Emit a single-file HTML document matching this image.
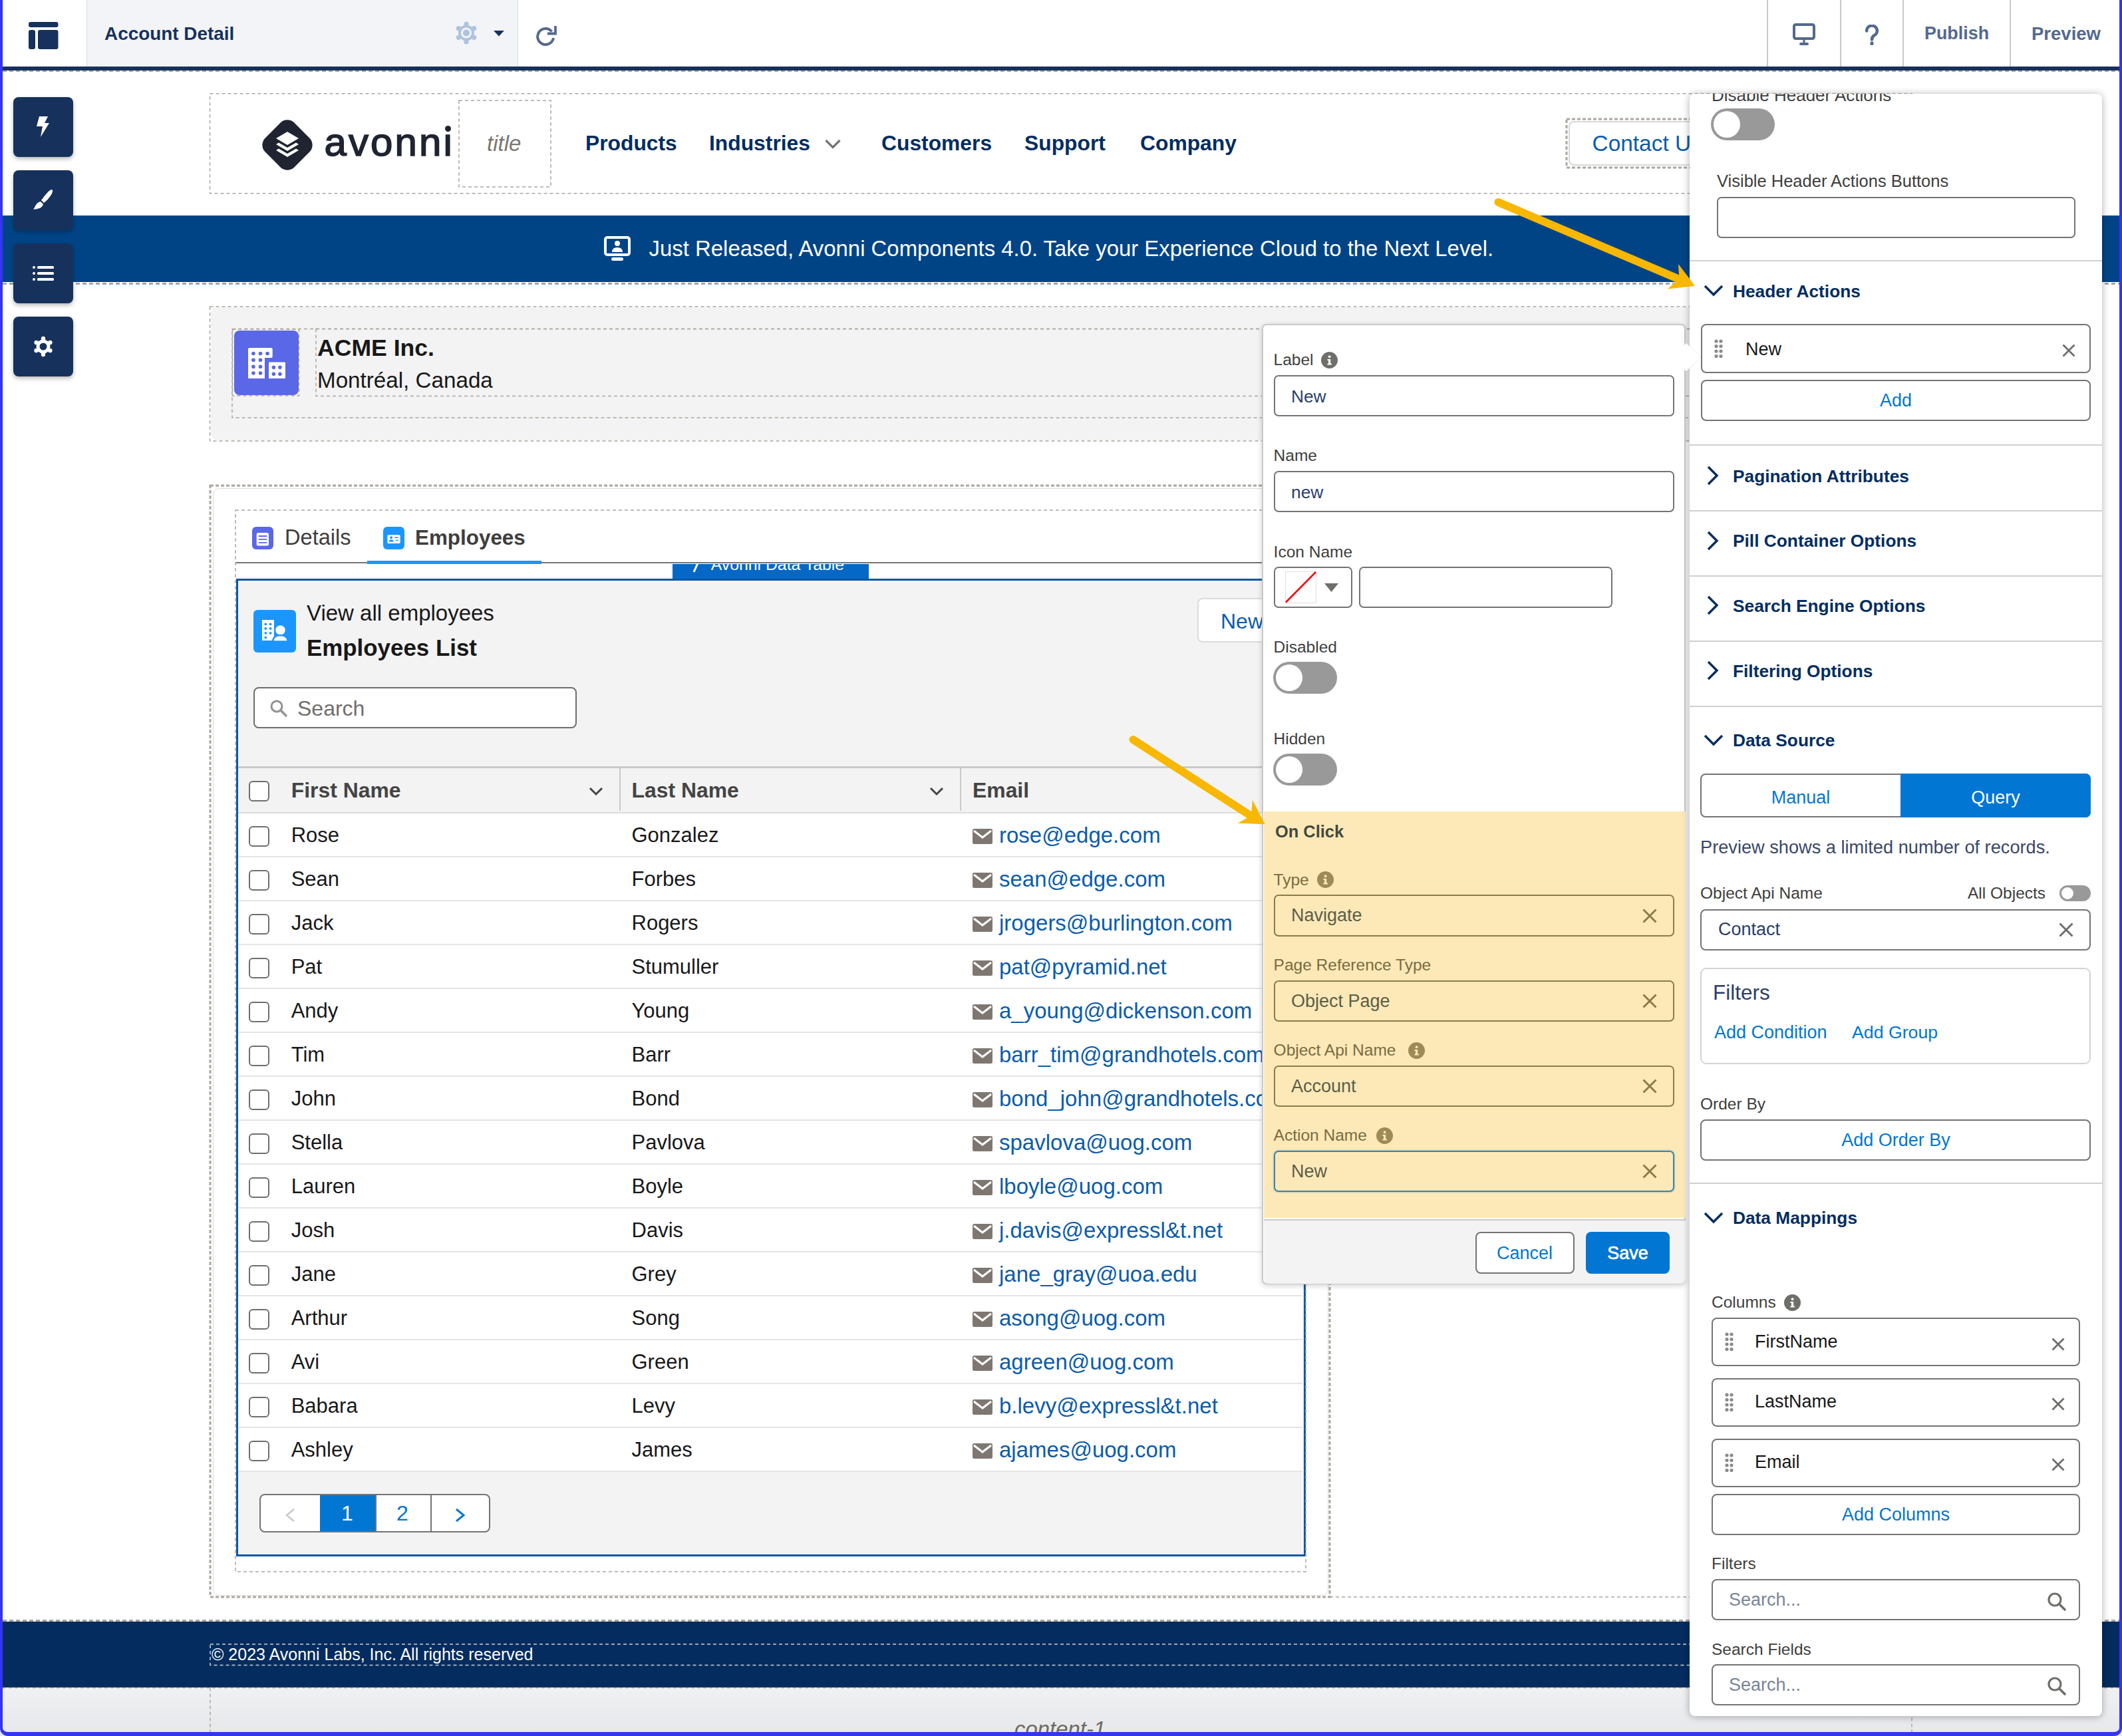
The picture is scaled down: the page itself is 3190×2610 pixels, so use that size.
<!DOCTYPE html><html><head><meta charset="utf-8"><style>
html,body{margin:0;padding:0;}
body{width:3190px;height:2610px;position:relative;overflow:hidden;background:#fff;font-family:"Liberation Sans", sans-serif;}
.a{position:absolute;}
.t{position:absolute;white-space:nowrap;line-height:1;}
</style></head><body>
<div class="a" style="left:0px;top:2438px;width:3190px;height:99px;background:#042c5f"></div>
<div class="a" style="left:0px;top:2537px;width:3190px;height:73px;background:linear-gradient(#f0f1f3,#e6e7ea)"></div>
<div class="t " style="left:1525.0px;top:2584.2px;font-size:32.9px;color:#6e6a64;font-weight:400;font-style:italic">content-1</div>
<div class="a" style="left:0px;top:324px;width:3190px;height:100px;background:#014486"></div>
<svg class="a" style="left:908px;top:355px" width="40" height="38" viewBox="0 0 40 38">
<rect x="2" y="2" width="36" height="26" rx="3" fill="none" stroke="#fff" stroke-width="4"/>
<circle cx="20" cy="11" r="4" fill="#fff"/><path d="M12 24 q0-7 8-7 q8 0 8 7z" fill="#fff"/>
<rect x="11" y="32" width="18" height="5" rx="2.5" fill="#fff"/></svg>
<div class="t " style="left:975.6px;top:358.2px;font-size:32.9px;color:#fff;font-weight:400;">Just Released, Avonni Components 4.0. Take your Experience Cloud to the Next Level.</div>
<svg class="a" style="left:392px;top:179px" width="80" height="78" viewBox="0 0 80 78">
<rect x="9" y="8" width="62" height="62" rx="15" fill="#1f2430" transform="rotate(45 40 39)"/>
<path d="M40 19 L57 29 L40 39 L23 29 Z" fill="#fff"/>
<path d="M23 38 L27 35.5 L40 43 L53 35.5 L57 38 L40 48 Z" fill="#fff"/>
<path d="M23 47 L27 44.5 L40 52 L53 44.5 L57 47 L40 57 Z" fill="#fff"/></svg>
<div class="t " style="left:487.5px;top:184.2px;font-size:60px;color:#1f2430;font-weight:400;-webkit-text-stroke:1.6px #1f2430;letter-spacing:3.1px">avonni</div>
<div class="a" style="left:667px;top:188px;width:12px;height:11px;background:#fff"></div>
<div class="a" style="left:668.5px;top:189px;width:9px;height:9px;background:#1f2430;border-radius:50%"></div>
<div class="t " style="left:732.0px;top:199.1px;font-size:33px;color:#7b766f;font-weight:400;font-style:italic">title</div>
<div class="t " style="left:880.0px;top:200.1px;font-size:31.8px;color:#032d60;font-weight:700;">Products</div>
<div class="t " style="left:1066.0px;top:200.1px;font-size:31.8px;color:#032d60;font-weight:700;">Industries</div>
<div class="t " style="left:1325.0px;top:200.1px;font-size:31.8px;color:#032d60;font-weight:700;">Customers</div>
<div class="t " style="left:1540.0px;top:200.1px;font-size:31.8px;color:#032d60;font-weight:700;">Support</div>
<div class="t " style="left:1714.0px;top:200.1px;font-size:31.8px;color:#032d60;font-weight:700;">Company</div>
<svg class="a" style="left:1239px;top:208px" width="26" height="18" viewBox="0 0 26 18"><path d="M2.5 3 L13 13.5 L23.5 3" fill="none" stroke="#747474" stroke-width="3.2"/></svg>
<div class="a" style="left:2358px;top:182px;width:400px;height:67px;background:#fff;border:2px solid #d8d8d8;border-radius:8px;box-sizing:border-box"></div>
<div class="t " style="left:2393.6px;top:198.7px;font-size:33.4px;color:#0b5cab;font-weight:400;">Contact Us</div>
<div class="a" style="left:317px;top:462px;width:2556px;height:200px;background:#f3f3f3;border-radius:10px"></div>
<div class="a" style="left:352px;top:497px;width:97px;height:97px;background:#5a67e6;border-radius:8px"></div>
<svg class="a" style="left:352px;top:497px" width="97" height="97" viewBox="0 0 97 97">
<path d="M23 26 L55.7 26 Q57.7 26 57.7 28 L57.7 39 Q57.7 41 55.7 41 L46 41 L46 72 L21 72 L21 28 Q21 26 23 26 Z" fill="#fff"/>
<path d="M52 48.4 Q52 47.4 53 47.4 L76 47.4 Q77 47.4 77 48.4 L77 72 L52 72 Z" fill="#fff"/>
<g fill="#5a67e6"><circle cx="28.9" cy="34.5" r="2.8"/><circle cx="39.5" cy="34.5" r="2.8"/><circle cx="50" cy="34.5" r="2.8"/><circle cx="28.9" cy="44.3" r="2.8"/><circle cx="39.5" cy="44.3" r="2.8"/><circle cx="28.9" cy="54.2" r="2.8"/><circle cx="39.5" cy="54.2" r="2.8"/><circle cx="28.9" cy="64" r="2.8"/><circle cx="39.5" cy="64" r="2.8"/><circle cx="59.4" cy="55.3" r="2.8"/><circle cx="68.9" cy="55.3" r="2.8"/><circle cx="59.4" cy="65.2" r="2.8"/><circle cx="68.9" cy="65.2" r="2.8"/></g></svg>
<div class="t " style="left:477.0px;top:506.4px;font-size:35.6px;color:#181818;font-weight:700;">ACME Inc.</div>
<div class="t " style="left:477.0px;top:554.9px;font-size:33.2px;color:#181818;font-weight:400;">Montréal, Canada</div>
<div class="a" style="left:320px;top:734px;width:1677px;height:1665px;background:#fff;border:1.5px solid #dddbda;border-radius:10px;box-sizing:border-box"></div>
<div class="a" style="left:354px;top:845px;width:1609px;height:2px;background:#747474"></div>
<div class="a" style="left:552px;top:843px;width:262px;height:4.5px;background:#1b96ff"></div>
<div class="a" style="left:379px;top:792px;width:32px;height:34px;background:#5a67e6;border-radius:6px"></div>
<svg class="a" style="left:379px;top:792px" width="32" height="34" viewBox="0 0 32 34"><rect x="6.7" y="9" width="18.3" height="19.4" rx="2.5" fill="#fff"/><path d="M10.4 14h11.2M10.4 18.9h11.2M10.4 23.8h11.2" stroke="#5a67e6" stroke-width="1.8" stroke-linecap="round"/></svg>
<div class="t " style="left:428.0px;top:792.4px;font-size:32.6px;color:#3e3e3c;font-weight:400;">Details</div>
<div class="a" style="left:576px;top:792px;width:32px;height:34px;background:#1b96ff;border-radius:6px"></div>
<svg class="a" style="left:576px;top:792px" width="32" height="34" viewBox="0 0 32 34"><rect x="6.4" y="12.3" width="19.2" height="12.7" rx="1.5" fill="#fff"/><circle cx="12.1" cy="16.3" r="2" fill="#1b96ff"/><path d="M8.6 22.5 Q8.8 19.3 12.1 19.3 Q15.4 19.3 15.6 22.5 Z" fill="#1b96ff"/><rect x="17" y="15.5" width="6" height="1.6" rx="0.8" fill="#1b96ff"/><rect x="19" y="19.5" width="4" height="1.6" rx="0.8" fill="#1b96ff"/></svg>
<div class="t " style="left:624.0px;top:793.4px;font-size:31.4px;color:#3e3e3c;font-weight:700;">Employees</div>
<div class="a" style="left:1011px;top:847.6px;width:295px;height:26px;background:#0568c6;overflow:hidden"></div>
<div class="a" style="left:1011px;top:847.6px;width:295px;height:26px;overflow:hidden"><div class="t" style="left:57.7px;top:-11px;font-size:24.8px;color:#fff;line-height:1">Avonni Data Table</div><svg class="a" style="left:30px;top:-10px" width="16" height="24" viewBox="0 0 16 24"><path d="M12 0 L2 22" stroke="#fff" stroke-width="3"/></svg></div>
<div class="a" style="left:355px;top:870px;width:1608px;height:1470px;background:#f3f3f3;border:3.5px solid #0a57a7;box-sizing:border-box"></div>
<div class="a" style="left:381px;top:917px;width:64px;height:64px;background:#1b96ff;border-radius:6px"></div>
<svg class="a" style="left:381px;top:917px" width="64" height="64" viewBox="0 0 64 64">
<path d="M13 15 L31 15 L31 46 L13 46 Z" fill="#fff"/>
<g fill="#1b96ff"><circle cx="18.3" cy="21.3" r="1.9"/><circle cx="25.6" cy="21.3" r="1.9"/><circle cx="18.3" cy="28" r="1.9"/><circle cx="25.6" cy="28" r="1.9"/><circle cx="18.3" cy="34.8" r="1.9"/><circle cx="25.6" cy="34.8" r="1.9"/><circle cx="18.3" cy="41.6" r="1.9"/></g>
<circle cx="40.5" cy="30.4" r="8.5" fill="#fff" stroke="#1b96ff" stroke-width="2.5"/>
<path d="M29 47.5 Q30 38 40.5 38 Q51 38 52 47.5 Z" fill="#fff" stroke="#1b96ff" stroke-width="2.5"/></svg>
<div class="t " style="left:461.0px;top:905.1px;font-size:33px;color:#181818;font-weight:400;">View all employees</div>
<div class="t " style="left:461.0px;top:956.5px;font-size:34.9px;color:#181818;font-weight:700;">Employees List</div>
<div class="a" style="left:1800px;top:899px;width:300px;height:67px;background:#fff;border:2px solid #dddbda;border-radius:8px;box-sizing:border-box"></div>
<div class="t " style="left:1835.0px;top:917.9px;font-size:32px;color:#0b5cab;font-weight:400;">New</div>
<div class="a" style="left:381px;top:1033px;width:486px;height:62px;background:#fff;border:2px solid #706e6b;border-radius:8px;box-sizing:border-box"></div>
<svg class="a" style="left:404px;top:1050px" width="30" height="30" viewBox="0 0 30 30"><circle cx="12" cy="12" r="8" fill="none" stroke="#939393" stroke-width="3"/><path d="M18 18 L26 26" stroke="#939393" stroke-width="3.5" stroke-linecap="round"/></svg>
<div class="t " style="left:447.0px;top:1048.9px;font-size:32px;color:#706e6b;font-weight:400;">Search</div>
<div class="a" style="left:358px;top:1152px;width:1600px;height:3px;background:#c9c9c9"></div>
<div class="a" style="left:358px;top:1155px;width:1600px;height:67px;background:#f3f3f3"></div>
<div class="a" style="left:358px;top:1221px;width:1600px;height:2px;background:#dcdcdc"></div>
<div class="a" style="left:930.5px;top:1155px;width:2px;height:64px;background:#c9c9c9"></div>
<div class="a" style="left:1443px;top:1155px;width:2px;height:64px;background:#c9c9c9"></div>
<div class="a" style="left:374px;top:1174px;width:31px;height:31px;background:#fff;border:2px solid #706e6b;border-radius:6px;box-sizing:border-box"></div>
<div class="t " style="left:437.7px;top:1172.6px;font-size:31.9px;color:#444444;font-weight:700;">First Name</div>
<div class="t " style="left:949.5px;top:1172.6px;font-size:31.9px;color:#444444;font-weight:700;">Last Name</div>
<div class="t " style="left:1462.0px;top:1172.6px;font-size:31.9px;color:#444444;font-weight:700;">Email</div>
<svg class="a" style="left:885px;top:1183px" width="22" height="14" viewBox="0 0 22 14"><path d="M2 2 L11 11 L20 2" fill="none" stroke="#444" stroke-width="3"/></svg>
<svg class="a" style="left:1396.6px;top:1183px" width="22" height="14" viewBox="0 0 22 14"><path d="M2 2 L11 11 L20 2" fill="none" stroke="#444" stroke-width="3"/></svg>
<div class="a" style="left:358px;top:1223px;width:1600px;height:64px;background:#fff"></div>
<div class="a" style="left:358px;top:1287px;width:1600px;height:2px;background:#e5e5e5"></div>
<div class="a" style="left:374px;top:1242px;width:31px;height:31px;background:#fff;border:2px solid #706e6b;border-radius:6px;box-sizing:border-box"></div>
<div class="t " style="left:437.7px;top:1240.3px;font-size:31px;color:#181818;font-weight:400;">Rose</div>
<div class="t " style="left:949.5px;top:1240.3px;font-size:31px;color:#181818;font-weight:400;">Gonzalez</div>
<svg class="a" style="left:1462px;top:1246px" width="30" height="23" viewBox="0 0 30 23"><rect x="0" y="0" width="30" height="23" rx="2.5" fill="#7e7771"/><path d="M2 3 L15 13 L28 3" fill="none" stroke="#fff" stroke-width="3"/></svg>
<div class="t " style="left:1502.0px;top:1238.6px;font-size:33px;color:#0b5cab;font-weight:400;">rose@edge.com</div>
<div class="a" style="left:358px;top:1289px;width:1600px;height:64px;background:#fff"></div>
<div class="a" style="left:358px;top:1353px;width:1600px;height:2px;background:#e5e5e5"></div>
<div class="a" style="left:374px;top:1308px;width:31px;height:31px;background:#fff;border:2px solid #706e6b;border-radius:6px;box-sizing:border-box"></div>
<div class="t " style="left:437.7px;top:1306.3px;font-size:31px;color:#181818;font-weight:400;">Sean</div>
<div class="t " style="left:949.5px;top:1306.3px;font-size:31px;color:#181818;font-weight:400;">Forbes</div>
<svg class="a" style="left:1462px;top:1312px" width="30" height="23" viewBox="0 0 30 23"><rect x="0" y="0" width="30" height="23" rx="2.5" fill="#7e7771"/><path d="M2 3 L15 13 L28 3" fill="none" stroke="#fff" stroke-width="3"/></svg>
<div class="t " style="left:1502.0px;top:1304.6px;font-size:33px;color:#0b5cab;font-weight:400;">sean@edge.com</div>
<div class="a" style="left:358px;top:1355px;width:1600px;height:64px;background:#fff"></div>
<div class="a" style="left:358px;top:1419px;width:1600px;height:2px;background:#e5e5e5"></div>
<div class="a" style="left:374px;top:1374px;width:31px;height:31px;background:#fff;border:2px solid #706e6b;border-radius:6px;box-sizing:border-box"></div>
<div class="t " style="left:437.7px;top:1372.3px;font-size:31px;color:#181818;font-weight:400;">Jack</div>
<div class="t " style="left:949.5px;top:1372.3px;font-size:31px;color:#181818;font-weight:400;">Rogers</div>
<svg class="a" style="left:1462px;top:1378px" width="30" height="23" viewBox="0 0 30 23"><rect x="0" y="0" width="30" height="23" rx="2.5" fill="#7e7771"/><path d="M2 3 L15 13 L28 3" fill="none" stroke="#fff" stroke-width="3"/></svg>
<div class="t " style="left:1502.0px;top:1370.6px;font-size:33px;color:#0b5cab;font-weight:400;">jrogers@burlington.com</div>
<div class="a" style="left:358px;top:1421px;width:1600px;height:64px;background:#fff"></div>
<div class="a" style="left:358px;top:1485px;width:1600px;height:2px;background:#e5e5e5"></div>
<div class="a" style="left:374px;top:1440px;width:31px;height:31px;background:#fff;border:2px solid #706e6b;border-radius:6px;box-sizing:border-box"></div>
<div class="t " style="left:437.7px;top:1438.3px;font-size:31px;color:#181818;font-weight:400;">Pat</div>
<div class="t " style="left:949.5px;top:1438.3px;font-size:31px;color:#181818;font-weight:400;">Stumuller</div>
<svg class="a" style="left:1462px;top:1444px" width="30" height="23" viewBox="0 0 30 23"><rect x="0" y="0" width="30" height="23" rx="2.5" fill="#7e7771"/><path d="M2 3 L15 13 L28 3" fill="none" stroke="#fff" stroke-width="3"/></svg>
<div class="t " style="left:1502.0px;top:1436.6px;font-size:33px;color:#0b5cab;font-weight:400;">pat@pyramid.net</div>
<div class="a" style="left:358px;top:1487px;width:1600px;height:64px;background:#fff"></div>
<div class="a" style="left:358px;top:1551px;width:1600px;height:2px;background:#e5e5e5"></div>
<div class="a" style="left:374px;top:1506px;width:31px;height:31px;background:#fff;border:2px solid #706e6b;border-radius:6px;box-sizing:border-box"></div>
<div class="t " style="left:437.7px;top:1504.3px;font-size:31px;color:#181818;font-weight:400;">Andy</div>
<div class="t " style="left:949.5px;top:1504.3px;font-size:31px;color:#181818;font-weight:400;">Young</div>
<svg class="a" style="left:1462px;top:1510px" width="30" height="23" viewBox="0 0 30 23"><rect x="0" y="0" width="30" height="23" rx="2.5" fill="#7e7771"/><path d="M2 3 L15 13 L28 3" fill="none" stroke="#fff" stroke-width="3"/></svg>
<div class="t " style="left:1502.0px;top:1502.6px;font-size:33px;color:#0b5cab;font-weight:400;">a_young@dickenson.com</div>
<div class="a" style="left:358px;top:1553px;width:1600px;height:64px;background:#fff"></div>
<div class="a" style="left:358px;top:1617px;width:1600px;height:2px;background:#e5e5e5"></div>
<div class="a" style="left:374px;top:1572px;width:31px;height:31px;background:#fff;border:2px solid #706e6b;border-radius:6px;box-sizing:border-box"></div>
<div class="t " style="left:437.7px;top:1570.3px;font-size:31px;color:#181818;font-weight:400;">Tim</div>
<div class="t " style="left:949.5px;top:1570.3px;font-size:31px;color:#181818;font-weight:400;">Barr</div>
<svg class="a" style="left:1462px;top:1576px" width="30" height="23" viewBox="0 0 30 23"><rect x="0" y="0" width="30" height="23" rx="2.5" fill="#7e7771"/><path d="M2 3 L15 13 L28 3" fill="none" stroke="#fff" stroke-width="3"/></svg>
<div class="t " style="left:1502.0px;top:1568.6px;font-size:33px;color:#0b5cab;font-weight:400;">barr_tim@grandhotels.com</div>
<div class="a" style="left:358px;top:1619px;width:1600px;height:64px;background:#fff"></div>
<div class="a" style="left:358px;top:1683px;width:1600px;height:2px;background:#e5e5e5"></div>
<div class="a" style="left:374px;top:1638px;width:31px;height:31px;background:#fff;border:2px solid #706e6b;border-radius:6px;box-sizing:border-box"></div>
<div class="t " style="left:437.7px;top:1636.3px;font-size:31px;color:#181818;font-weight:400;">John</div>
<div class="t " style="left:949.5px;top:1636.3px;font-size:31px;color:#181818;font-weight:400;">Bond</div>
<svg class="a" style="left:1462px;top:1642px" width="30" height="23" viewBox="0 0 30 23"><rect x="0" y="0" width="30" height="23" rx="2.5" fill="#7e7771"/><path d="M2 3 L15 13 L28 3" fill="none" stroke="#fff" stroke-width="3"/></svg>
<div class="t " style="left:1502.0px;top:1634.6px;font-size:33px;color:#0b5cab;font-weight:400;">bond_john@grandhotels.com</div>
<div class="a" style="left:358px;top:1685px;width:1600px;height:64px;background:#fff"></div>
<div class="a" style="left:358px;top:1749px;width:1600px;height:2px;background:#e5e5e5"></div>
<div class="a" style="left:374px;top:1704px;width:31px;height:31px;background:#fff;border:2px solid #706e6b;border-radius:6px;box-sizing:border-box"></div>
<div class="t " style="left:437.7px;top:1702.3px;font-size:31px;color:#181818;font-weight:400;">Stella</div>
<div class="t " style="left:949.5px;top:1702.3px;font-size:31px;color:#181818;font-weight:400;">Pavlova</div>
<svg class="a" style="left:1462px;top:1708px" width="30" height="23" viewBox="0 0 30 23"><rect x="0" y="0" width="30" height="23" rx="2.5" fill="#7e7771"/><path d="M2 3 L15 13 L28 3" fill="none" stroke="#fff" stroke-width="3"/></svg>
<div class="t " style="left:1502.0px;top:1700.6px;font-size:33px;color:#0b5cab;font-weight:400;">spavlova@uog.com</div>
<div class="a" style="left:358px;top:1751px;width:1600px;height:64px;background:#fff"></div>
<div class="a" style="left:358px;top:1815px;width:1600px;height:2px;background:#e5e5e5"></div>
<div class="a" style="left:374px;top:1770px;width:31px;height:31px;background:#fff;border:2px solid #706e6b;border-radius:6px;box-sizing:border-box"></div>
<div class="t " style="left:437.7px;top:1768.3px;font-size:31px;color:#181818;font-weight:400;">Lauren</div>
<div class="t " style="left:949.5px;top:1768.3px;font-size:31px;color:#181818;font-weight:400;">Boyle</div>
<svg class="a" style="left:1462px;top:1774px" width="30" height="23" viewBox="0 0 30 23"><rect x="0" y="0" width="30" height="23" rx="2.5" fill="#7e7771"/><path d="M2 3 L15 13 L28 3" fill="none" stroke="#fff" stroke-width="3"/></svg>
<div class="t " style="left:1502.0px;top:1766.6px;font-size:33px;color:#0b5cab;font-weight:400;">lboyle@uog.com</div>
<div class="a" style="left:358px;top:1817px;width:1600px;height:64px;background:#fff"></div>
<div class="a" style="left:358px;top:1881px;width:1600px;height:2px;background:#e5e5e5"></div>
<div class="a" style="left:374px;top:1836px;width:31px;height:31px;background:#fff;border:2px solid #706e6b;border-radius:6px;box-sizing:border-box"></div>
<div class="t " style="left:437.7px;top:1834.3px;font-size:31px;color:#181818;font-weight:400;">Josh</div>
<div class="t " style="left:949.5px;top:1834.3px;font-size:31px;color:#181818;font-weight:400;">Davis</div>
<svg class="a" style="left:1462px;top:1840px" width="30" height="23" viewBox="0 0 30 23"><rect x="0" y="0" width="30" height="23" rx="2.5" fill="#7e7771"/><path d="M2 3 L15 13 L28 3" fill="none" stroke="#fff" stroke-width="3"/></svg>
<div class="t " style="left:1502.0px;top:1832.6px;font-size:33px;color:#0b5cab;font-weight:400;">j.davis@expressl&amp;t.net</div>
<div class="a" style="left:358px;top:1883px;width:1600px;height:64px;background:#fff"></div>
<div class="a" style="left:358px;top:1947px;width:1600px;height:2px;background:#e5e5e5"></div>
<div class="a" style="left:374px;top:1902px;width:31px;height:31px;background:#fff;border:2px solid #706e6b;border-radius:6px;box-sizing:border-box"></div>
<div class="t " style="left:437.7px;top:1900.3px;font-size:31px;color:#181818;font-weight:400;">Jane</div>
<div class="t " style="left:949.5px;top:1900.3px;font-size:31px;color:#181818;font-weight:400;">Grey</div>
<svg class="a" style="left:1462px;top:1906px" width="30" height="23" viewBox="0 0 30 23"><rect x="0" y="0" width="30" height="23" rx="2.5" fill="#7e7771"/><path d="M2 3 L15 13 L28 3" fill="none" stroke="#fff" stroke-width="3"/></svg>
<div class="t " style="left:1502.0px;top:1898.6px;font-size:33px;color:#0b5cab;font-weight:400;">jane_gray@uoa.edu</div>
<div class="a" style="left:358px;top:1949px;width:1600px;height:64px;background:#fff"></div>
<div class="a" style="left:358px;top:2013px;width:1600px;height:2px;background:#e5e5e5"></div>
<div class="a" style="left:374px;top:1968px;width:31px;height:31px;background:#fff;border:2px solid #706e6b;border-radius:6px;box-sizing:border-box"></div>
<div class="t " style="left:437.7px;top:1966.3px;font-size:31px;color:#181818;font-weight:400;">Arthur</div>
<div class="t " style="left:949.5px;top:1966.3px;font-size:31px;color:#181818;font-weight:400;">Song</div>
<svg class="a" style="left:1462px;top:1972px" width="30" height="23" viewBox="0 0 30 23"><rect x="0" y="0" width="30" height="23" rx="2.5" fill="#7e7771"/><path d="M2 3 L15 13 L28 3" fill="none" stroke="#fff" stroke-width="3"/></svg>
<div class="t " style="left:1502.0px;top:1964.6px;font-size:33px;color:#0b5cab;font-weight:400;">asong@uog.com</div>
<div class="a" style="left:358px;top:2015px;width:1600px;height:64px;background:#fff"></div>
<div class="a" style="left:358px;top:2079px;width:1600px;height:2px;background:#e5e5e5"></div>
<div class="a" style="left:374px;top:2034px;width:31px;height:31px;background:#fff;border:2px solid #706e6b;border-radius:6px;box-sizing:border-box"></div>
<div class="t " style="left:437.7px;top:2032.3px;font-size:31px;color:#181818;font-weight:400;">Avi</div>
<div class="t " style="left:949.5px;top:2032.3px;font-size:31px;color:#181818;font-weight:400;">Green</div>
<svg class="a" style="left:1462px;top:2038px" width="30" height="23" viewBox="0 0 30 23"><rect x="0" y="0" width="30" height="23" rx="2.5" fill="#7e7771"/><path d="M2 3 L15 13 L28 3" fill="none" stroke="#fff" stroke-width="3"/></svg>
<div class="t " style="left:1502.0px;top:2030.6px;font-size:33px;color:#0b5cab;font-weight:400;">agreen@uog.com</div>
<div class="a" style="left:358px;top:2081px;width:1600px;height:64px;background:#fff"></div>
<div class="a" style="left:358px;top:2145px;width:1600px;height:2px;background:#e5e5e5"></div>
<div class="a" style="left:374px;top:2100px;width:31px;height:31px;background:#fff;border:2px solid #706e6b;border-radius:6px;box-sizing:border-box"></div>
<div class="t " style="left:437.7px;top:2098.3px;font-size:31px;color:#181818;font-weight:400;">Babara</div>
<div class="t " style="left:949.5px;top:2098.3px;font-size:31px;color:#181818;font-weight:400;">Levy</div>
<svg class="a" style="left:1462px;top:2104px" width="30" height="23" viewBox="0 0 30 23"><rect x="0" y="0" width="30" height="23" rx="2.5" fill="#7e7771"/><path d="M2 3 L15 13 L28 3" fill="none" stroke="#fff" stroke-width="3"/></svg>
<div class="t " style="left:1502.0px;top:2096.6px;font-size:33px;color:#0b5cab;font-weight:400;">b.levy@expressl&amp;t.net</div>
<div class="a" style="left:358px;top:2147px;width:1600px;height:64px;background:#fff"></div>
<div class="a" style="left:358px;top:2211px;width:1600px;height:2px;background:#e5e5e5"></div>
<div class="a" style="left:374px;top:2166px;width:31px;height:31px;background:#fff;border:2px solid #706e6b;border-radius:6px;box-sizing:border-box"></div>
<div class="t " style="left:437.7px;top:2164.3px;font-size:31px;color:#181818;font-weight:400;">Ashley</div>
<div class="t " style="left:949.5px;top:2164.3px;font-size:31px;color:#181818;font-weight:400;">James</div>
<svg class="a" style="left:1462px;top:2170px" width="30" height="23" viewBox="0 0 30 23"><rect x="0" y="0" width="30" height="23" rx="2.5" fill="#7e7771"/><path d="M2 3 L15 13 L28 3" fill="none" stroke="#fff" stroke-width="3"/></svg>
<div class="t " style="left:1502.0px;top:2162.6px;font-size:33px;color:#0b5cab;font-weight:400;">ajames@uog.com</div>
<div class="a" style="left:390px;top:2246px;width:347px;height:58px;background:#fff;border:2px solid #747474;border-radius:8px;box-sizing:border-box;overflow:hidden">
<div class="a" style="left:89px;top:0;width:83px;height:54px;background:#0176d3"></div>
<div class="a" style="left:172px;top:0;width:2px;height:54px;background:#747474"></div>
<div class="a" style="left:255px;top:0;width:2px;height:54px;background:#747474"></div></div>
<svg class="a" style="left:427px;top:2267px" width="18" height="22" viewBox="0 0 18 22"><path d="M15 2 L4 11 L15 20" fill="none" stroke="#c9c9c9" stroke-width="2.5"/></svg>
<div class="t" style="left:22.0px;width:1000px;text-align:center;top:2258.9px;font-size:32px;color:#fff;font-weight:400;">1</div>
<div class="t" style="left:105.0px;width:1000px;text-align:center;top:2258.9px;font-size:32px;color:#0176d3;font-weight:400;">2</div>
<svg class="a" style="left:683px;top:2267px" width="18" height="22" viewBox="0 0 18 22"><path d="M3 2 L14 11 L3 20" fill="none" stroke="#0176d3" stroke-width="3"/></svg>
<div class="t " style="left:318.0px;top:2474.8px;font-size:25px;color:#fff;font-weight:400;">© 2023 Avonni Labs, Inc. All rights reserved</div>
<svg class="a" style="left:0;top:0" width="3190" height="2610"><line x1="4" y1="107" x2="3186" y2="107" stroke="#aba79f" stroke-width="2" stroke-dasharray="6 4"/><rect x="315.5" y="140.8" width="2559" height="150" fill="none" stroke="#aba79f" stroke-width="1.5" stroke-dasharray="5 4"/><rect x="690" y="151" width="138" height="130" fill="none" stroke="#aba79f" stroke-width="1.5" stroke-dasharray="5 4"/><rect x="2355" y="179" width="430" height="73" fill="none" stroke="#aba79f" stroke-width="3" stroke-dasharray="5 3"/><line x1="4" y1="426.5" x2="3186" y2="426.5" stroke="#aba79f" stroke-width="3" stroke-dasharray="6 4"/><rect x="315.5" y="461" width="2559" height="202" fill="none" stroke="#aba79f" stroke-width="1.5" stroke-dasharray="5 4"/><rect x="349" y="494.4" width="2400" height="133.6" fill="none" stroke="#aba79f" stroke-width="1.5" stroke-dasharray="5 4"/><rect x="349.5" y="495" width="100" height="100" fill="none" stroke="#aba79f" stroke-width="1.5" stroke-dasharray="5 4"/><rect x="475" y="494.4" width="2300" height="101" fill="none" stroke="#aba79f" stroke-width="1.5" stroke-dasharray="5 4"/><rect x="316" y="730" width="1683" height="1671" fill="none" stroke="#aba79f" stroke-width="3" stroke-dasharray="5 3"/><line x1="1999" y1="2401" x2="2875" y2="2401" stroke="#aba79f" stroke-width="1.5" stroke-dasharray="5 4"/><line x1="2875" y1="730" x2="2875" y2="2401" stroke="#aba79f" stroke-width="1.5" stroke-dasharray="5 4"/><rect x="354" y="767" width="1609" height="1596" fill="none" stroke="#aba79f" stroke-width="1.5" stroke-dasharray="5 4"/><line x1="4" y1="2436.5" x2="3186" y2="2436.5" stroke="#aba79f" stroke-width="3" stroke-dasharray="6 4"/><rect x="316" y="2472" width="2559" height="31.5" fill="none" stroke="#d0d0d0" stroke-width="1.5" stroke-dasharray="5 4"/><line x1="4" y1="2537.5" x2="3186" y2="2537.5" stroke="#aba79f" stroke-width="1.5" stroke-dasharray="5 4"/><line x1="316" y1="2537.5" x2="316" y2="2610" stroke="#aba79f" stroke-width="1.5" stroke-dasharray="5 4"/><line x1="2874" y1="2537.5" x2="2874" y2="2610" stroke="#aba79f" stroke-width="1.5" stroke-dasharray="5 4"/></svg>
<div class="a" style="left:0px;top:0px;width:3190px;height:100px;background:#fff"></div>
<div class="a" style="left:130px;top:0px;width:649px;height:100px;background:#f3f4f8;border-left:1.5px solid #d8dde6;border-right:1.5px solid #d8dde6;box-sizing:border-box"></div>
<div class="a" style="left:0px;top:100px;width:3190px;height:6px;background:#16325c"></div>
<svg class="a" style="left:43px;top:33px" width="45" height="41" viewBox="0 0 45 41">
<rect x="0" y="0" width="44.5" height="8" rx="3" fill="#16325c"/>
<rect x="0" y="12" width="10" height="29" rx="3" fill="#16325c"/>
<rect x="14" y="12" width="30.5" height="29" rx="3" fill="#16325c"/></svg>
<div class="t " style="left:157.0px;top:37.4px;font-size:27.9px;color:#16325c;font-weight:700;">Account Detail</div>
<svg class="a" style="left:684px;top:32px" width="34" height="35" viewBox="0 0 34 35">
<g fill="#aec3dc"><circle cx="17" cy="17.5" r="12"/>
<circle cx="17" cy="4" r="3.6"/><circle cx="17" cy="31" r="3.6"/>
<circle cx="5.3" cy="10.7" r="3.6"/><circle cx="28.7" cy="10.7" r="3.6"/>
<circle cx="5.3" cy="24.3" r="3.6"/><circle cx="28.7" cy="24.3" r="3.6"/></g>
<circle cx="17" cy="17.5" r="8" fill="#f3f4f8"/><circle cx="17" cy="17.5" r="5" fill="#aec3dc"/></svg>
<svg class="a" style="left:742px;top:46px" width="16" height="9" viewBox="0 0 16 9"><path d="M0 0 L16 0 L8 8.5z" fill="#16325c"/></svg>
<svg class="a" style="left:805px;top:38px" width="34" height="31" viewBox="0 0 34 31">
<path d="M27 19 A12 12 0 1 1 24.5 9.5" fill="none" stroke="#54698d" stroke-width="4"/>
<path d="M30 1 L30 12.5 L18 12.5" fill="none" stroke="#54698d" stroke-width="3.8"/></svg>
<div class="a" style="left:2656px;top:0px;width:2px;height:100px;background:#c9c9c9"></div>
<div class="a" style="left:2766px;top:0px;width:2px;height:100px;background:#c9c9c9"></div>
<div class="a" style="left:2860px;top:0px;width:2px;height:100px;background:#c9c9c9"></div>
<div class="a" style="left:3021px;top:0px;width:2px;height:100px;background:#c9c9c9"></div>
<svg class="a" style="left:2695px;top:35px" width="34" height="34" viewBox="0 0 34 34">
<rect x="2" y="2" width="30" height="21" rx="2.5" fill="none" stroke="#54698d" stroke-width="4"/>
<rect x="15.5" y="25" width="3" height="5" fill="#54698d"/><rect x="10" y="29" width="14" height="4" rx="2" fill="#54698d"/></svg>
<svg class="a" style="left:2803px;top:37px" width="22" height="32" viewBox="0 0 22 32"><path d="M3.2 9.5 A7.8 7.8 0 1 1 14.5 16.2 Q11 18.3 11 22.5" fill="none" stroke="#54698d" stroke-width="4.6" stroke-linecap="round"/><rect x="8.5" y="25.5" width="5" height="5.5" rx="1.8" fill="#54698d"/></svg>
<div class="t " style="left:2893.0px;top:37.2px;font-size:26.9px;color:#54698d;font-weight:700;">Publish</div>
<div class="t " style="left:3054.0px;top:36.7px;font-size:27.5px;color:#54698d;font-weight:700;">Preview</div>
<div class="a" style="left:20px;top:146px;width:90px;height:90px;background:#16325c;border-radius:8px;box-shadow:0 3px 6px rgba(0,0,0,0.28)"></div>
<div class="a" style="left:20px;top:256px;width:90px;height:90px;background:#16325c;border-radius:8px;box-shadow:0 3px 6px rgba(0,0,0,0.28)"></div>
<div class="a" style="left:20px;top:366px;width:90px;height:90px;background:#16325c;border-radius:8px;box-shadow:0 3px 6px rgba(0,0,0,0.28)"></div>
<div class="a" style="left:20px;top:476px;width:90px;height:90px;background:#16325c;border-radius:8px;box-shadow:0 3px 6px rgba(0,0,0,0.28)"></div>
<svg class="a" style="left:52px;top:172px" width="26" height="36" viewBox="0 0 26 36"><path d="M7 3 L20 3 L15 13 L22 13 L9 34 L12 18 L3 18 Z" fill="#fff"/></svg>
<svg class="a" style="left:48px;top:283px" width="36" height="36" viewBox="0 0 36 36"><path d="M30 2 C34 4 26 16 18 22 L14 18 C20 10 27 1 30 2 Z" fill="#fff"/><path d="M13 20 L17 24 C15 30 10 31 2 32 C5 29 5 22 13 20 Z" fill="#fff"/></svg>
<svg class="a" style="left:49px;top:400px" width="32" height="23" viewBox="0 0 32 23"><g fill="#fff"><rect x="0" y="0" width="4" height="4" rx="2"/><rect x="0" y="9" width="4" height="4" rx="2"/><rect x="0" y="18" width="4" height="4" rx="2"/><rect x="7" y="0" width="25" height="4" rx="1.5"/><rect x="7" y="9" width="25" height="4" rx="1.5"/><rect x="7" y="18" width="25" height="4" rx="1.5"/></g></svg>
<svg class="a" style="left:50px;top:505px" width="30" height="32" viewBox="0 0 30 32">
<g fill="#fff"><circle cx="15" cy="16" r="10.5"/>
<circle cx="15" cy="4" r="3.2"/><circle cx="15" cy="28" r="3.2"/>
<circle cx="4.6" cy="10" r="3.2"/><circle cx="25.4" cy="10" r="3.2"/>
<circle cx="4.6" cy="22" r="3.2"/><circle cx="25.4" cy="22" r="3.2"/></g>
<circle cx="15" cy="16" r="5.5" fill="#16325c"/></svg>
<div class="a" style="left:1897px;top:487px;width:637px;height:1444px;background:#fff;border:2px solid #c9c9c9;border-radius:7px;box-sizing:border-box;box-shadow:0 2px 8px rgba(0,0,0,0.18)"></div>
<div class="t " style="left:1914.6px;top:529.3px;font-size:24.5px;color:#3e3e3c;font-weight:400;">Label</div>
<svg class="a" style="left:1986px;top:528.5px" width="25" height="25" viewBox="0 0 25 25"><circle cx="12.5" cy="12.5" r="12.5" fill="#706e6b"/><rect x="11" y="11" width="3.2" height="8" fill="#fff"/><rect x="9.5" y="11" width="3" height="2" fill="#fff"/><rect x="9.5" y="17.5" width="6.5" height="2" fill="#fff"/><circle cx="12.6" cy="7.2" r="1.9" fill="#fff"/></svg>
<div class="a" style="left:1914.6px;top:564px;width:602.4px;height:62px;background:#fff;border:2px solid #747474;border-radius:7px;box-sizing:border-box;"></div>
<div class="t " style="left:1941.0px;top:582.7px;font-size:26.3px;color:#2b3e69;font-weight:400;">New</div>
<div class="t " style="left:1914.6px;top:673.3px;font-size:24.5px;color:#3e3e3c;font-weight:400;">Name</div>
<div class="a" style="left:1914.6px;top:708px;width:602.4px;height:62px;background:#fff;border:2px solid #747474;border-radius:7px;box-sizing:border-box;"></div>
<div class="t " style="left:1941.0px;top:726.7px;font-size:26.3px;color:#2b3e69;font-weight:400;">new</div>
<div class="t " style="left:1914.6px;top:817.8px;font-size:24.5px;color:#3e3e3c;font-weight:400;">Icon Name</div>
<div class="a" style="left:1914.6px;top:852px;width:118.4px;height:62px;background:#fff;border:2px solid #747474;border-radius:7px;box-sizing:border-box;"></div>
<div class="a" style="left:1932px;top:859px;width:47px;height:47.5px;background:#fff;border:1px solid #dedede;box-sizing:border-box"></div>
<svg class="a" style="left:1932px;top:859px" width="47" height="48" viewBox="0 0 47 48"><path d="M1 46.5 L46 1" stroke="#f00" stroke-width="2.5"/></svg>
<svg class="a" style="left:1991px;top:877px" width="21" height="13" viewBox="0 0 21 13"><path d="M0 0 L21 0 L10.5 13z" fill="#706e6b"/></svg>
<div class="a" style="left:2043px;top:852px;width:381px;height:62px;background:#fff;border:2px solid #747474;border-radius:7px;box-sizing:border-box;"></div>
<div class="t " style="left:1914.6px;top:961.3px;font-size:24.5px;color:#3e3e3c;font-weight:400;">Disabled</div>
<div class="a" style="left:1914px;top:995px;width:96px;height:48px;background:#999;border-radius:24.0px"></div>
<div class="a" style="left:1918px;top:999px;width:40px;height:40px;background:#fff;border-radius:50%"></div>
<div class="t " style="left:1914.6px;top:1099.3px;font-size:24.5px;color:#3e3e3c;font-weight:400;">Hidden</div>
<div class="a" style="left:1914px;top:1133px;width:96px;height:48px;background:#999;border-radius:24.0px"></div>
<div class="a" style="left:1918px;top:1137px;width:40px;height:40px;background:#fff;border-radius:50%"></div>
<div class="a" style="left:1900px;top:1220px;width:634px;height:611px;background:#fde9b8"></div>
<div class="t " style="left:1917.0px;top:1237.5px;font-size:25.4px;color:#434a3f;font-weight:700;">On Click</div>
<div class="t " style="left:1914.6px;top:1310.9px;font-size:24.5px;color:#7a6b3e;font-weight:400;">Type</div>
<svg class="a" style="left:1980px;top:1309.5px" width="25" height="25" viewBox="0 0 25 25"><circle cx="12.5" cy="12.5" r="12.5" fill="#9d8a57"/><rect x="11" y="11" width="3.2" height="8" fill="#fde9b8"/><rect x="9.5" y="11" width="3" height="2" fill="#fde9b8"/><rect x="9.5" y="17.5" width="6.5" height="2" fill="#fde9b8"/><circle cx="12.6" cy="7.2" r="1.9" fill="#fde9b8"/></svg>
<div class="a" style="left:1914.6px;top:1345px;width:602.4px;height:63px;background:#fde9b8;border:2px solid #8b7b4c;border-radius:7px;box-sizing:border-box;"></div>
<div class="t " style="left:1941.0px;top:1363.1px;font-size:27px;color:#5c5d47;font-weight:400;">Navigate</div>
<svg class="a" style="left:2469px;top:1366px" width="22" height="22" viewBox="0 0 22 22"><path d="M1.5 1.5 L20.5 20.5 M20.5 1.5 L1.5 20.5" stroke="#8b7b4c" stroke-width="3"/></svg>
<div class="t " style="left:1914.6px;top:1439.3px;font-size:24.5px;color:#7a6b3e;font-weight:400;">Page Reference Type</div>
<div class="a" style="left:1914.6px;top:1474px;width:602.4px;height:62px;background:#fde9b8;border:2px solid #8b7b4c;border-radius:7px;box-sizing:border-box;"></div>
<div class="t " style="left:1941.0px;top:1492.1px;font-size:27px;color:#5c5d47;font-weight:400;">Object Page</div>
<svg class="a" style="left:2469px;top:1494px" width="22" height="22" viewBox="0 0 22 22"><path d="M1.5 1.5 L20.5 20.5 M20.5 1.5 L1.5 20.5" stroke="#8b7b4c" stroke-width="3"/></svg>
<div class="t " style="left:1914.6px;top:1567.3px;font-size:24.5px;color:#7a6b3e;font-weight:400;">Object Api Name</div>
<svg class="a" style="left:2116.5px;top:1566.5px" width="25" height="25" viewBox="0 0 25 25"><circle cx="12.5" cy="12.5" r="12.5" fill="#9d8a57"/><rect x="11" y="11" width="3.2" height="8" fill="#fde9b8"/><rect x="9.5" y="11" width="3" height="2" fill="#fde9b8"/><rect x="9.5" y="17.5" width="6.5" height="2" fill="#fde9b8"/><circle cx="12.6" cy="7.2" r="1.9" fill="#fde9b8"/></svg>
<div class="a" style="left:1914.6px;top:1602px;width:602.4px;height:62px;background:#fde9b8;border:2px solid #8b7b4c;border-radius:7px;box-sizing:border-box;"></div>
<div class="t " style="left:1941.0px;top:1620.1px;font-size:27px;color:#5c5d47;font-weight:400;">Account</div>
<svg class="a" style="left:2469px;top:1622px" width="22" height="22" viewBox="0 0 22 22"><path d="M1.5 1.5 L20.5 20.5 M20.5 1.5 L1.5 20.5" stroke="#8b7b4c" stroke-width="3"/></svg>
<div class="t " style="left:1914.6px;top:1695.3px;font-size:24.5px;color:#7a6b3e;font-weight:400;">Action Name</div>
<svg class="a" style="left:2069px;top:1694.5px" width="25" height="25" viewBox="0 0 25 25"><circle cx="12.5" cy="12.5" r="12.5" fill="#9d8a57"/><rect x="11" y="11" width="3.2" height="8" fill="#fde9b8"/><rect x="9.5" y="11" width="3" height="2" fill="#fde9b8"/><rect x="9.5" y="17.5" width="6.5" height="2" fill="#fde9b8"/><circle cx="12.6" cy="7.2" r="1.9" fill="#fde9b8"/></svg>
<div class="a" style="left:1914.6px;top:1730px;width:602.4px;height:62px;background:#fde9b8;border:2px solid #3f84a6;border-radius:7px;box-sizing:border-box;box-shadow:0 0 3px #6aa7c8"></div>
<div class="t " style="left:1941.0px;top:1748.1px;font-size:27px;color:#5c5d47;font-weight:400;">New</div>
<svg class="a" style="left:2469px;top:1750px" width="22" height="22" viewBox="0 0 22 22"><path d="M1.5 1.5 L20.5 20.5 M20.5 1.5 L1.5 20.5" stroke="#8b7b4c" stroke-width="3"/></svg>
<div class="a" style="left:1900px;top:1833px;width:634px;height:2px;background:#c9c9c9"></div>
<div class="a" style="left:1900px;top:1835px;width:634px;height:95px;background:#f3f3f3;border-radius:0 0 7px 7px"></div>
<div class="a" style="left:2217.7px;top:1851.6px;width:149.3px;height:63px;background:#fff;border:2px solid #747474;border-radius:8px;box-sizing:border-box"></div>
<div class="t" style="left:1792.0px;width:1000px;text-align:center;top:1870.6px;font-size:27px;color:#0176d3;font-weight:400;">Cancel</div>
<div class="a" style="left:2384px;top:1851.6px;width:125.7px;height:63px;background:#0176d3;border-radius:8px"></div>
<div class="t" style="left:1947.0px;width:1000px;text-align:center;top:1870.6px;font-size:27px;color:#fff;font-weight:400;-webkit-text-stroke:0.7px #fff">Save</div>
<div class="a" style="left:2540px;top:141px;width:620px;height:2439px;background:#fff;border-radius:8px;box-shadow:0 1px 12px rgba(0,0,0,0.32);overflow:hidden">
<div class="t " style="left:33.0px;top:-11.0px;font-size:26px;color:#3e3e3c;font-weight:400;">Disable Header Actions</div>
<div class="a" style="left:32px;top:22px;width:96px;height:48px;background:#999;border-radius:24px"></div>
<div class="a" style="left:36px;top:26px;width:40px;height:40px;background:#fff;border-radius:50%"></div>
<div class="t " style="left:41.0px;top:119.4px;font-size:25.5px;color:#3e3e3c;font-weight:400;">Visible Header Actions Buttons</div>
<div class="a" style="left:41px;top:155px;width:539px;height:62px;background:#fff;border:2px solid #747474;border-radius:7px;box-sizing:border-box"></div>
<div class="a" style="left:0px;top:250px;width:620px;height:2px;background:#d0d0d0"></div>
<svg class="a" style="left:21px;top:287px" width="30" height="18" viewBox="0 0 30 18"><path d="M2 2 L15 15 L28 2" fill="none" stroke="#032d60" stroke-width="3.5"/></svg>
<div class="t " style="left:65.0px;top:283.7px;font-size:26.3px;color:#032d60;font-weight:700;">Header Actions</div>
<div class="a" style="left:17px;top:346px;width:586px;height:74px;background:#fff;border:2px solid #747474;border-radius:8px;box-sizing:border-box"></div>
<svg class="a" style="left:37px;top:368.5px" width="14" height="29" viewBox="0 0 14 29"><g fill="#8a8a8a"><circle cx="3" cy="3" r="2.6"/><circle cx="3" cy="10.5" r="2.6"/><circle cx="3" cy="18" r="2.6"/><circle cx="3" cy="25.5" r="2.6"/><circle cx="10" cy="3" r="2.6"/><circle cx="10" cy="10.5" r="2.6"/><circle cx="10" cy="18" r="2.6"/><circle cx="10" cy="25.5" r="2.6"/></g></svg>
<div class="t " style="left:84.0px;top:371.1px;font-size:27px;color:#181818;font-weight:400;">New</div>
<svg class="a" style="left:560px;top:376.0px" width="20" height="20" viewBox="0 0 20 20"><path d="M1.5 1.5 L18.5 18.5 M18.5 1.5 L1.5 18.5" stroke="#706e6b" stroke-width="2.8"/></svg>
<div class="a" style="left:17px;top:429.5px;width:586px;height:62.5px;background:#fff;border:2px solid #747474;border-radius:8px;box-sizing:border-box"></div>
<div class="t " style="left:-190.0px;top:425.0px;font-size:27px;color:#0176d3;font-weight:400;"></div>
<div class="t" style="left:10px;width:600px;text-align:center;top:447.8px;font-size:27px;color:#0176d3">Add</div>
<div class="a" style="left:0px;top:527px;width:620px;height:2px;background:#d0d0d0"></div>
<div class="a" style="left:0px;top:626px;width:620px;height:2px;background:#d0d0d0"></div>
<div class="a" style="left:0px;top:723.5px;width:620px;height:2px;background:#d0d0d0"></div>
<div class="a" style="left:0px;top:821.5px;width:620px;height:2px;background:#d0d0d0"></div>
<div class="a" style="left:0px;top:920px;width:620px;height:2px;background:#d0d0d0"></div>
<svg class="a" style="left:26px;top:559.2px" width="18" height="30" viewBox="0 0 18 30"><path d="M2 2 L15 15 L2 28" fill="none" stroke="#032d60" stroke-width="3.5"/></svg>
<div class="t " style="left:65.0px;top:561.9px;font-size:26.3px;color:#032d60;font-weight:700;">Pagination Attributes</div>
<svg class="a" style="left:26px;top:656.5px" width="18" height="30" viewBox="0 0 18 30"><path d="M2 2 L15 15 L2 28" fill="none" stroke="#032d60" stroke-width="3.5"/></svg>
<div class="t " style="left:65.0px;top:659.2px;font-size:26.3px;color:#032d60;font-weight:700;">Pill Container Options</div>
<svg class="a" style="left:26px;top:753.9px" width="18" height="30" viewBox="0 0 18 30"><path d="M2 2 L15 15 L2 28" fill="none" stroke="#032d60" stroke-width="3.5"/></svg>
<div class="t " style="left:65.0px;top:756.6px;font-size:26.3px;color:#032d60;font-weight:700;">Search Engine Options</div>
<svg class="a" style="left:26px;top:852.3px" width="18" height="30" viewBox="0 0 18 30"><path d="M2 2 L15 15 L2 28" fill="none" stroke="#032d60" stroke-width="3.5"/></svg>
<div class="t " style="left:65.0px;top:855.0px;font-size:26.3px;color:#032d60;font-weight:700;">Filtering Options</div>
<svg class="a" style="left:21px;top:963px" width="30" height="18" viewBox="0 0 30 18"><path d="M2 2 L15 15 L28 2" fill="none" stroke="#032d60" stroke-width="3.5"/></svg>
<div class="t " style="left:65.0px;top:959.3px;font-size:26.3px;color:#032d60;font-weight:700;">Data Source</div>
<div class="a" style="left:16px;top:1022px;width:587px;height:65.6px;background:#fff;border:2px solid #747474;border-radius:8px;box-sizing:border-box;overflow:hidden"></div>
<div class="a" style="left:317px;top:1022px;width:286px;height:65.6px;background:#0176d3;border-radius:0 8px 8px 0"></div>
<div class="t" style="left:-133px;width:600px;text-align:center;top:1044.6px;font-size:27px;color:#0176d3;font-weight:400">Manual</div>
<div class="t" style="left:160px;width:600px;text-align:center;top:1044.6px;font-size:27px;color:#fff;font-weight:400">Query</div>
<div class="t " style="left:16.0px;top:1119.0px;font-size:27.2px;color:#3a4868;font-weight:400;">Preview shows a limited number of records.</div>
<div class="t " style="left:16.0px;top:1190.3px;font-size:24.5px;color:#3e3e3c;font-weight:400;">Object Api Name</div>
<div class="t " style="left:418.0px;top:1190.3px;font-size:24.5px;color:#3e3e3c;font-weight:400;">All Objects</div>
<div class="a" style="left:556px;top:1190px;width:47px;height:24px;background:#999;border-radius:12px"></div>
<div class="a" style="left:559px;top:1193px;width:18px;height:18px;background:#fff;border-radius:50%"></div>
<div class="a" style="left:16px;top:1225.5px;width:587px;height:62.5px;background:#fff;border:2px solid #747474;border-radius:8px;box-sizing:border-box"></div>
<div class="t " style="left:43.0px;top:1243.1px;font-size:27px;color:#2b3e69;font-weight:400;">Contact</div>
<svg class="a" style="left:555px;top:1246px" width="22" height="22" viewBox="0 0 22 22"><path d="M1.5 1.5 L20.5 20.5 M20.5 1.5 L1.5 20.5" stroke="#706e6b" stroke-width="3"/></svg>
<div class="a" style="left:16px;top:1314px;width:587px;height:145px;background:#fff;border:2px solid #d4d4d4;border-radius:9px;box-sizing:border-box"></div>
<div class="t " style="left:35.0px;top:1336.3px;font-size:31.5px;color:#2b3e69;font-weight:400;">Filters</div>
<div class="t " style="left:37.0px;top:1398.1px;font-size:27px;color:#0176d3;font-weight:400;">Add Condition</div>
<div class="t " style="left:244.0px;top:1398.4px;font-size:26.7px;color:#0176d3;font-weight:400;">Add Group</div>
<div class="t " style="left:16.0px;top:1507.3px;font-size:24.5px;color:#3e3e3c;font-weight:400;">Order By</div>
<div class="a" style="left:16px;top:1542px;width:587px;height:62px;background:#fff;border:2px solid #747474;border-radius:8px;box-sizing:border-box"></div>
<div class="t" style="left:10px;width:600px;text-align:center;top:1560.1px;font-size:27px;color:#0176d3;font-weight:400">Add Order By</div>
<div class="a" style="left:0px;top:1637px;width:620px;height:2px;background:#d0d0d0"></div>
<svg class="a" style="left:21px;top:1681px" width="30" height="18" viewBox="0 0 30 18"><path d="M2 2 L15 15 L28 2" fill="none" stroke="#032d60" stroke-width="3.5"/></svg>
<div class="t " style="left:65.0px;top:1676.7px;font-size:26.3px;color:#032d60;font-weight:700;">Data Mappings</div>
<div class="t " style="left:33.0px;top:1805.3px;font-size:24.5px;color:#3e3e3c;font-weight:400;">Columns</div>
<svg class="a" style="left:142px;top:1804.5px" width="25" height="25" viewBox="0 0 25 25"><circle cx="12.5" cy="12.5" r="12.5" fill="#706e6b"/><rect x="11" y="11" width="3.2" height="8" fill="#fff"/><rect x="9.5" y="11" width="3" height="2" fill="#fff"/><rect x="9.5" y="17.5" width="6.5" height="2" fill="#fff"/><circle cx="12.6" cy="7.2" r="1.9" fill="#fff"/></svg>
<div class="a" style="left:33px;top:1840px;width:554px;height:73px;background:#fff;border:2px solid #747474;border-radius:8px;box-sizing:border-box"></div>
<svg class="a" style="left:53px;top:1862.0px" width="14" height="29" viewBox="0 0 14 29"><g fill="#8a8a8a"><circle cx="3" cy="3" r="2.6"/><circle cx="3" cy="10.5" r="2.6"/><circle cx="3" cy="18" r="2.6"/><circle cx="3" cy="25.5" r="2.6"/><circle cx="10" cy="3" r="2.6"/><circle cx="10" cy="10.5" r="2.6"/><circle cx="10" cy="18" r="2.6"/><circle cx="10" cy="25.5" r="2.6"/></g></svg>
<div class="t " style="left:98.0px;top:1862.7px;font-size:27px;color:#181818;font-weight:400;">FirstName</div>
<svg class="a" style="left:544px;top:1869.5px" width="20" height="20" viewBox="0 0 20 20"><path d="M1.5 1.5 L18.5 18.5 M18.5 1.5 L1.5 18.5" stroke="#706e6b" stroke-width="2.8"/></svg>
<div class="a" style="left:33px;top:1930.6px;width:554px;height:73.4px;background:#fff;border:2px solid #747474;border-radius:8px;box-sizing:border-box"></div>
<svg class="a" style="left:53px;top:1952.7999999999997px" width="14" height="29" viewBox="0 0 14 29"><g fill="#8a8a8a"><circle cx="3" cy="3" r="2.6"/><circle cx="3" cy="10.5" r="2.6"/><circle cx="3" cy="18" r="2.6"/><circle cx="3" cy="25.5" r="2.6"/><circle cx="10" cy="3" r="2.6"/><circle cx="10" cy="10.5" r="2.6"/><circle cx="10" cy="18" r="2.6"/><circle cx="10" cy="25.5" r="2.6"/></g></svg>
<div class="t " style="left:98.0px;top:1953.3px;font-size:27px;color:#181818;font-weight:400;">LastName</div>
<svg class="a" style="left:544px;top:1960.2999999999997px" width="20" height="20" viewBox="0 0 20 20"><path d="M1.5 1.5 L18.5 18.5 M18.5 1.5 L1.5 18.5" stroke="#706e6b" stroke-width="2.8"/></svg>
<div class="a" style="left:33px;top:2021.5px;width:554px;height:73.5px;background:#fff;border:2px solid #747474;border-radius:8px;box-sizing:border-box"></div>
<svg class="a" style="left:53px;top:2043.75px" width="14" height="29" viewBox="0 0 14 29"><g fill="#8a8a8a"><circle cx="3" cy="3" r="2.6"/><circle cx="3" cy="10.5" r="2.6"/><circle cx="3" cy="18" r="2.6"/><circle cx="3" cy="25.5" r="2.6"/><circle cx="10" cy="3" r="2.6"/><circle cx="10" cy="10.5" r="2.6"/><circle cx="10" cy="18" r="2.6"/><circle cx="10" cy="25.5" r="2.6"/></g></svg>
<div class="t " style="left:98.0px;top:2044.2px;font-size:27px;color:#181818;font-weight:400;">Email</div>
<svg class="a" style="left:544px;top:2051.25px" width="20" height="20" viewBox="0 0 20 20"><path d="M1.5 1.5 L18.5 18.5 M18.5 1.5 L1.5 18.5" stroke="#706e6b" stroke-width="2.8"/></svg>
<div class="a" style="left:33px;top:2105px;width:554px;height:62px;background:#fff;border:2px solid #747474;border-radius:8px;box-sizing:border-box"></div>
<div class="t" style="left:10px;width:600px;text-align:center;top:2122.8px;font-size:27px;color:#0176d3;font-weight:400">Add Columns</div>
<div class="t " style="left:33.0px;top:2198.3px;font-size:24.5px;color:#3e3e3c;font-weight:400;">Filters</div>
<div class="a" style="left:33px;top:2233px;width:554px;height:61.7px;background:#fff;border:2px solid #747474;border-radius:8px;box-sizing:border-box"></div>
<div class="t " style="left:59.0px;top:2250.9px;font-size:27px;color:#7a8599;font-weight:400;">Search...</div>
<svg class="a" style="left:537px;top:2251.5px" width="30" height="30" viewBox="0 0 30 30"><circle cx="12" cy="12" r="9" fill="none" stroke="#706e6b" stroke-width="3.2"/><path d="M18.5 18.5 L27 27" stroke="#706e6b" stroke-width="3.6" stroke-linecap="round"/></svg>
<div class="t " style="left:33.0px;top:2326.8px;font-size:24.5px;color:#3e3e3c;font-weight:400;">Search Fields</div>
<div class="a" style="left:33px;top:2360.6px;width:554px;height:62px;background:#fff;border:2px solid #747474;border-radius:8px;box-sizing:border-box"></div>
<div class="t " style="left:59.0px;top:2378.6px;font-size:27px;color:#7a8599;font-weight:400;">Search...</div>
<svg class="a" style="left:537px;top:2379px" width="30" height="30" viewBox="0 0 30 30"><circle cx="12" cy="12" r="9" fill="none" stroke="#706e6b" stroke-width="3.2"/><path d="M18.5 18.5 L27 27" stroke="#706e6b" stroke-width="3.6" stroke-linecap="round"/></svg>
</div>
<div class="a" style="left:2519.6px;top:522px;width:30px;height:30px;background:#fff;transform:rotate(45deg);box-shadow:1px -1px 1px rgba(0,0,0,0.06)"></div>
<svg class="a" style="left:0;top:0" width="3190" height="2610">
<line x1="2252.5" y1="304" x2="2520" y2="418" stroke="#f8b700" stroke-width="12" stroke-linecap="round"/>
<path d="M2548 429.7 L2523 397 L2524 413.6 L2519.3 423.4 L2506.8 434.6 Z" fill="#f8b700"/>
<line x1="1703.5" y1="1112" x2="1878" y2="1225" stroke="#f8b700" stroke-width="12" stroke-linecap="round"/>
<path d="M1901.7 1239.3 L1883 1203 L1881.4 1220 L1875 1229.7 L1860.4 1237.6 Z" fill="#f8b700"/>
</svg>
<div class="a" style="left:0;top:-20px;width:3190px;height:2630px;border:4px solid #3434f4;border-top:0;border-bottom-width:6px;border-radius:0 0 12px 12px;box-sizing:border-box"></div>
</body></html>
